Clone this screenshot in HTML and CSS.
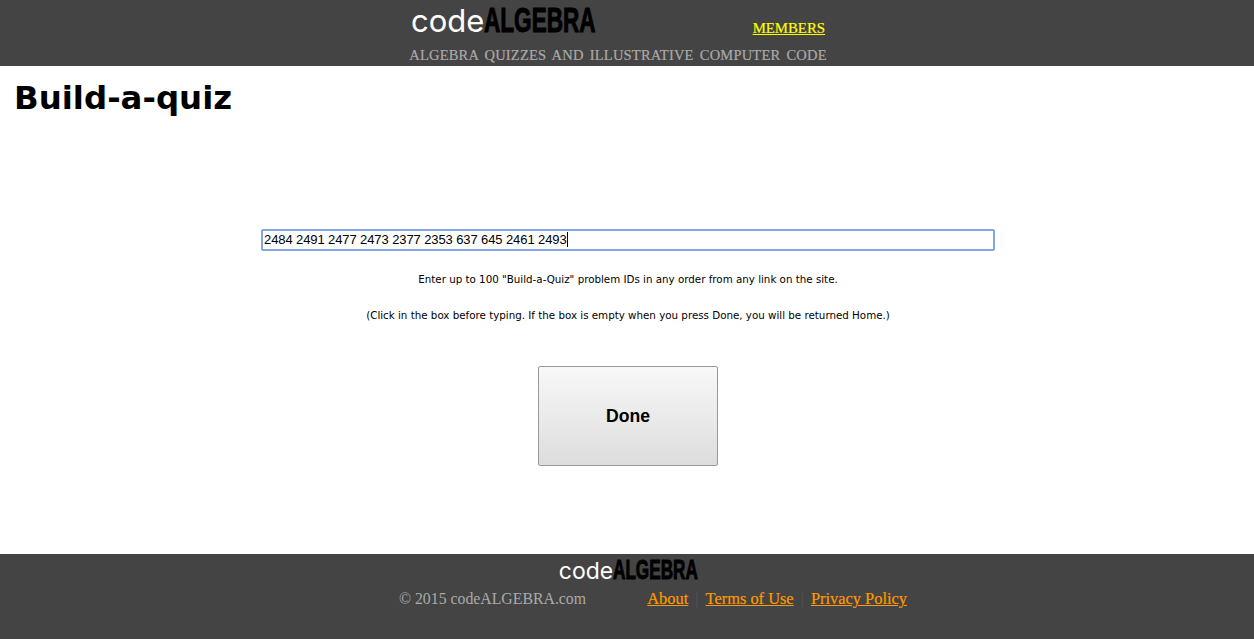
FILE: index.html
```html
<!DOCTYPE html>
<html lang="en">
<head>
  <meta charset="UTF-8" />
  <title>Build-a-quiz</title>
  <link rel="stylesheet" href="styles.css">
</head>
<body>
  <header>
    <div class="header-top">
      <div class="logo"><span class="logo-code">code</span><span class="logo-algebra">ALGEBRA</span></div>
      <a class="members" href="#">MEMBERS</a>
    </div>
    <p class="tagline">ALGEBRA QUIZZES AND ILLUSTRATIVE COMPUTER CODE</p>
  </header>

  <main>
    <h1>Build-a-quiz</h1>
    <div class="quiz-form">
      <div class="id-box">2484 2491 2477 2473 2377 2353 637 645 2461 2493<span class="caret"></span></div>
      <p class="hint hint-first">Enter up to 100 "Build-a-Quiz" problem IDs in any order from any link on the site.</p>
      <p class="hint hint-second">(Click in the box before typing. If the box is empty when you press Done, you will be returned Home.)</p>
      <button class="done">Done</button>
    </div>
  </main>

  <footer>
    <div class="logo logo-small"><span class="logo-code">code</span><span class="logo-algebra">ALGEBRA</span></div>
    <div class="footer-row">
      <span class="copyright">© 2015 codeALGEBRA.com</span>
      <nav>
        <a href="#">About</a><span class="sep">|</span><a href="#">Terms of Use</a><span class="sep">|</span><a href="#">Privacy Policy</a>
      </nav>
    </div>
  </footer>
</body>
</html>
```

FILE: styles.css
```css
body {
  margin: 0;
  padding: 0;
  background-color: #fff;
  font-family: "DejaVu Sans", sans-serif;
  color: #000;
}

header {
  height: 66px;
  padding-right: 18px;
  background-color: #444;
  display: flex;
  flex-direction: column;
  align-items: center;
  overflow: hidden;
}

.header-top {
  width: 418px;
  height: 45px;
  display: flex;
  justify-content: space-between;
}

.logo {
  display: flex;
  align-items: baseline;
  padding: 1px 0 0 2px;
  line-height: 38px;
}

.logo-code {
  font-family: Inter, sans-serif;
  font-size: 31px;
  color: #fff;
}

/* condensed heavy wordmark, no Impact here so squeeze the bold sans */
.logo-algebra {
  display: inline-block;
  width: 111px;
  font-family: "Liberation Sans", sans-serif;
  font-size: 35px;
  font-weight: bold;
  color: #000;
  white-space: nowrap;
  -webkit-text-stroke: 1px #000;
  transform: scaleX(0.645);
  transform-origin: left;
}

.members {
  margin: 19px 2px 0 0;
  font-family: "Liberation Serif", serif;
  font-size: 14.8px;
  line-height: 18px;
  color: #ff0;
  -webkit-text-stroke: 0.2px #ff0;
}

.tagline {
  margin: 0;
  font-family: "Liberation Serif", serif;
  font-size: 14.5px;
  line-height: 20px;
  letter-spacing: 0.2px;
  word-spacing: 2.3px;
  color: #aaa;
  -webkit-text-stroke: 0.2px #aaa;
}

main {
  height: 488px;
}

h1 {
  margin: 0;
  padding: 12px 0 0 14px;
  font-size: 32.4px;
  line-height: 40px;
  font-weight: bold;
}

.quiz-form {
  display: flex;
  flex-direction: column;
  align-items: center;
  padding: 111px 0 0 2px;
}

.id-box {
  box-sizing: border-box;
  width: 734px;
  height: 22px;
  padding: 0 1px;
  border: 2px solid #85a5e4;
  border-radius: 2px;
  font-family: "Liberation Sans", sans-serif;
  font-size: 13px;
  letter-spacing: -0.1px;
  line-height: 17px;
}

.caret {
  display: inline-block;
  width: 1px;
  height: 15px;
  background-color: #000;
  vertical-align: -3px;
}

.hint {
  margin: 0;
  font-size: 10.3px;
  line-height: 14px;
}

.hint-first {
  margin-top: 21px;
}

.hint-second {
  margin-top: 22px;
}

.done {
  width: 180px;
  height: 100px;
  margin-top: 44px;
  border: 1px solid #999;
  border-radius: 2px;
  background: linear-gradient(#f8f8f8, #ddd);
  font-family: "Liberation Sans", sans-serif;
  font-size: 17.6px;
  font-weight: bold;
  color: #000;
}

footer {
  height: 85px;
  background-color: #444;
  display: flex;
  flex-direction: column;
  align-items: center;
}

.logo-small {
  padding: 2px 0 0 2px;
  line-height: 28px;
}

.logo-small .logo-code {
  font-size: 23px;
}

.logo-small .logo-algebra {
  width: 84px;
  font-size: 27px;
  transform: scaleX(0.635);
}

.footer-row {
  width: 508px;
  margin: 4px 0 0 52px;
  display: flex;
  justify-content: space-between;
  font-family: "Liberation Serif", serif;
  font-size: 16.4px;
  line-height: 20px;
}

.copyright {
  font-size: 15.8px;
  color: #aaa;
}

footer nav a {
  color: #f90;
  -webkit-text-stroke: 0.2px #f90;
}

.sep {
  margin: 0 7px;
  color: #555;
}
```
